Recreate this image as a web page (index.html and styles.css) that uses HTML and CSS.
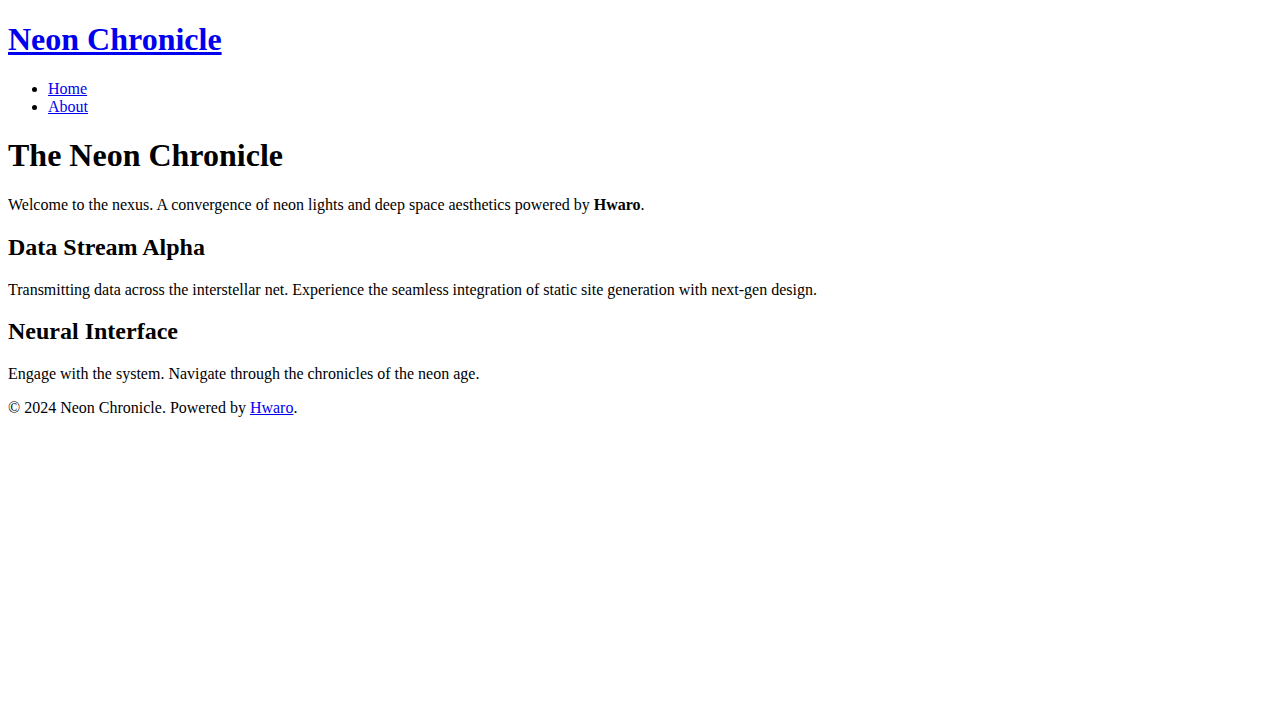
FILE: index.html
```html
<!DOCTYPE html>
<html lang="en">
<head>
<meta charset="utf-8">
<title>Neon Chronicle</title>
<link rel="stylesheet" href="styles.css">
</head>
<body class="page">
<header class="site-header">
  <h1 class="site-title"><a href="#">Neon Chronicle</a></h1>
  <nav class="site-nav">
    <ul>
      <li><a href="#">Home</a></li>
      <li><a href="#">About</a></li>
    </ul>
  </nav>
</header>
<main class="content">
  <h1>The Neon Chronicle</h1>
  <p>Welcome to the nexus. A convergence of neon lights and deep space aesthetics powered by <strong>Hwaro</strong>.</p>
  <h2>Data Stream Alpha</h2>
  <p>Transmitting data across the interstellar net. Experience the seamless integration of static site generation with next-gen design.</p>
  <h2>Neural Interface</h2>
  <p>Engage with the system. Navigate through the chronicles of the neon age.</p>
</main>
<footer class="site-footer">
  <p>&copy; 2024 Neon Chronicle. Powered by <a href="#">Hwaro</a>.</p>
</footer>
</body>
</html>
```
FILE: styles.css
```css
.page {
  font-family: "Liberation Serif", "Times New Roman", serif;
}

.site-title {
  margin-top: 13.44px;
}
```
